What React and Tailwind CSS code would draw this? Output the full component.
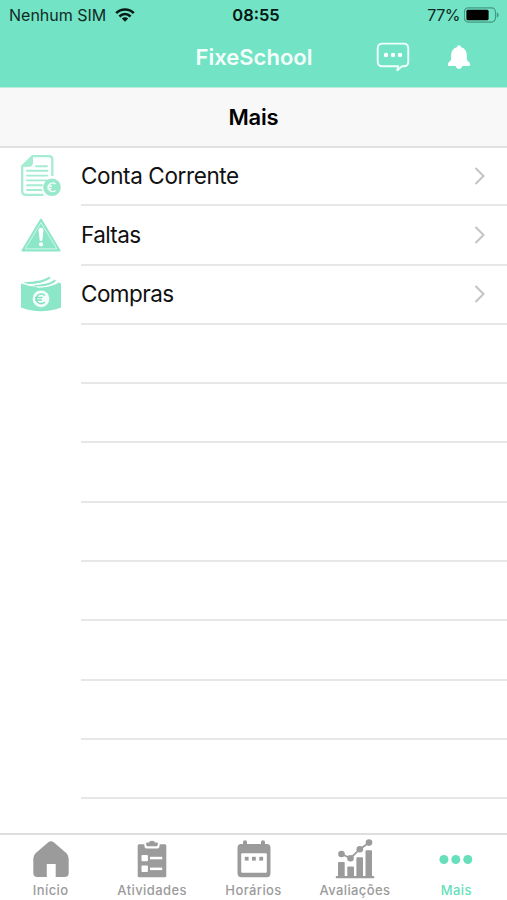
import React from 'react';

const items = [
  { label: 'Conta Corrente', icon: InvoiceIcon, spacing: 'tracking-[-0.38px]' },
  { label: 'Faltas', icon: WarningIcon, spacing: 'tracking-[-0.6px]' },
  { label: 'Compras', icon: MoneyIcon, spacing: 'tracking-[-0.55px]' },
];

const tabs = [
  { label: 'Início', icon: HomeIcon },
  { label: 'Atividades', icon: ClipboardIcon },
  { label: 'Horários', icon: CalendarIcon },
  { label: 'Avaliações', icon: ChartIcon },
  { label: 'Mais', icon: MoreIcon, active: true },
];

function WifiIcon() {
  return (
    <svg className="ml-[9px] h-[15px] w-5" viewBox="0 0 20 15" fill="none" stroke="#071a15" strokeWidth="2.7">
      <path d="M1.2 5.1C6.2.3 13.8.3 18.8 5.1" />
      <path d="M4.4 8.5C7.8 5.4 12.2 5.4 15.6 8.5" />
      <path d="M10 13.7 6.8 10.5C8.7 8.9 11.3 8.9 13.2 10.5Z" fill="#071a15" stroke="none" />
    </svg>
  );
}

function BatteryIcon() {
  return (
    <svg className="ml-1 h-4 w-9" viewBox="0 0 36 16">
      <rect x=".3" y=".9" width="31.2" height="14.2" rx="4" fill="none" stroke="#459a84" strokeWidth="1.2" />
      <rect x="2.4" y="2.8" width="22.2" height="10.4" rx="1.5" fill="#000" />
      <path d="M32.8 5.5C35.3 6.5 35.3 9.5 32.8 10.5Z" fill="#459a84" />
    </svg>
  );
}

function ChatIcon() {
  return (
    <svg className="h-[30px] w-[34px]" viewBox="0 0 34 30">
      <path d="M6.5 1.6H27.5Q32.3 1.6 32.3 6.4V19.4Q32.3 24.2 27.5 24.2H26L21.3 28.2 22.2 24.2H6.5Q1.7 24.2 1.7 19.4V6.4Q1.7 1.6 6.5 1.6Z" fill="none" stroke="#f0fffa" strokeWidth="1.9" strokeLinejoin="round" />
      <g fill="#fff"><circle cx="10" cy="13" r="2.2" /><circle cx="17" cy="13" r="2.2" /><circle cx="24" cy="13" r="2.2" /></g>
    </svg>
  );
}

function BellIcon() {
  return (
    <svg className="h-6 w-6" viewBox="0 0 24 24" fill="#fff">
      <path d="M12 .2C13.3.2 14 1 14 2.3 18 3.2 19.8 6.5 19.8 10V13.5C19.8 16.5 23.2 17 23.2 19.5Q23.2 21 21.8 21H15.3C15 22.9 13.7 23.8 12 23.8S9 22.9 8.7 21H2.2Q.8 21 .8 19.5C.8 17 4.2 16.5 4.2 13.5V10C4.2 6.5 6 3.2 10 2.3 10 1 10.7.2 12 .2Z" />
    </svg>
  );
}

function InvoiceIcon() {
  return (
    <svg className="h-[42px] w-10" viewBox="0 0 40 42" fill="none" stroke="#a5ecd3" strokeWidth="2.3">
      <path d="M31.3 21V4.5Q31.3 1.2 28 1.2H11.5L1.2 11.3V36Q1.2 39.9 5.1 39.9H22.5" />
      <path d="M11.5 1.2 1.2 11.3H8.5Q11.5 11.3 11.5 8.3Z" fill="#a5ecd3" strokeWidth="1" />
      <path d="M15 11.3H26M6 15.7H26.5M6 20.6H26.5M6 25.4H26M6 30.2H21M6 35H20.5" strokeWidth="1.9" strokeLinecap="round" />
      <circle cx="31" cy="32.2" r="8.8" fill="#98e9cc" stroke="none" />
      <path d="M34.5 29A4.3 4.3 0 1 0 34.5 35.5M26.3 31H31M26.3 33.4H30.5" stroke="#f4fffb" strokeWidth="1.5" />
    </svg>
  );
}

function WarningIcon() {
  return (
    <svg className="h-[34px] w-10" viewBox="0 0 40 34">
      <path d="M20 1.5 38.7 32.6H1.3Z" fill="#8ce6c8" stroke="#8ce6c8" strokeWidth="1.8" strokeLinejoin="round" />
      <path d="M20 4.5 35.9 30.9H4.1Z" fill="none" stroke="#d9f8ed" strokeWidth=".9" />
      <path d="M17.5 12Q17.5 9.7 20 9.7T22.5 12L21.3 22.2Q20 24 18.7 22.2Z" fill="#fff" />
      <circle cx="20" cy="26.3" r="2.1" fill="#fff" />
    </svg>
  );
}

function MoneyIcon() {
  return (
    <svg className="h-[36px] w-10" viewBox="0 0 40 36" fill="#8ce6c8">
      <path d="M0 7.5Q20 14.8 40 7.5V31.5Q20 39 0 31.5Z" />
      <path d="M1 5.7C12 6.7 23 4.4 28.3.5L29.6 2C24.5 6.3 15 8.1 8 8.2Z" />
      <path d="M11 9.2C20 9 29.5 7.3 33.8 3.5L35 5C31 8.8 23 10.8 17 10.6Z" />
      <path d="M25 10.7Q33 9.6 37.7 6.4L40 7.5Q34 10.5 25 10.7Z" />
      <path d="M6 8.9C17 9.1 26 6.9 30.5 2.9M16 11.2C25 11.2 32 9.4 36 5.8" fill="none" stroke="#fff" strokeWidth="1" />
      <circle cx="20" cy="22.8" r="8.4" fill="#f4fffb" />
      <path d="M23.8 19.5A4.9 4.9 0 1 0 23.8 26.1M14 21.6H21.5M14 24H20.8" fill="none" stroke="#7ee0c0" strokeWidth="1.5" />
    </svg>
  );
}

function HomeIcon() {
  return (
    <svg className="h-10 w-10" viewBox="0 0 40 40" fill="#9b9b9b">
      <path d="M17.3 3.2Q20 1.1 22.7 3.2L35.2 14Q37.7 16.2 37.7 19.5V34Q37.7 38 33.7 38H24.7V25H15.8V38H6.3Q2.3 38 2.3 34V19.5Q2.3 16.2 4.8 14Z" />
    </svg>
  );
}

function ClipboardIcon() {
  return (
    <svg className="h-10 w-10" viewBox="0 0 40 40" fill="#9b9b9b">
      <path d="M7.2 5.2H12.3Q12.3 9.4 14.5 9.4H25.5Q27.7 9.4 27.7 5.2H32.8Q34.3 5.2 34.3 6.7V36.7Q34.3 38.2 32.8 38.2H7.2Q5.7 38.2 5.7 36.7V6.7Q5.7 5.2 7.2 5.2Z" />
      <path d="M15.2 7.3Q14 6.5 14 4.5Q14 3.5 15.5 3.5H17Q17.3 1.8 20 1.8T23 3.5H24.5Q26 3.5 26 4.5Q26 6.5 24.8 7.3Z" />
      <g fill="#fff"><rect x="9.5" y="15.9" width="6.4" height="6.4" rx=".8" /><rect x="9.5" y="26.6" width="6.4" height="6.4" rx=".8" /><rect x="18" y="17.8" width="12.2" height="2.5" /><rect x="18" y="28.6" width="12.2" height="2.5" /></g>
    </svg>
  );
}

function CalendarIcon() {
  return (
    <svg className="h-10 w-10" viewBox="0 0 40 40" fill="#9b9b9b">
      <path d="M7 5H9V3Q9 1.3 11 1.3T13 3V5H27V3Q27 1.3 29 1.3T31 3V5H33Q36.5 5 36.5 9V34Q36.5 38.2 33 38.2H7.5Q3.5 38.2 3.5 34V9Q3.5 5 7 5Z" />
      <rect x="7.2" y="14.2" width="25.6" height="19.6" rx="1" fill="#fff" />
      <rect x="10.8" y="17.8" width="3.8" height="3.8" /><rect x="18" y="17.8" width="3.8" height="3.8" /><rect x="25.3" y="17.8" width="3.8" height="3.8" />
    </svg>
  );
}

function ChartIcon() {
  return (
    <svg className="h-10 w-10" viewBox="0 0 40 40" fill="#9b9b9b">
      <path d="M3 37.5V24Q3 23 4 23H8.7Q9.7 23 9.7 24V37.5ZM12.3 37.5V28.5Q12.3 27.5 13.3 27.5H18Q19 27.5 19 28.5V37.5ZM21.4 37.5V19.2Q21.4 18.2 22.4 18.2H27Q28 18.2 28 19.2V37.5ZM30.5 37.5V12.2Q30.5 11.2 31.5 11.2H36Q37 11.2 37 12.2V37.5Z" />
      <rect x=".7" y="37" width="38.6" height="2.3" rx="1" />
      <path d="M6.5 15 15.5 19.2 24.8 10.2 34 3.8" fill="none" stroke="#9b9b9b" strokeWidth="1.8" />
      <circle cx="6.5" cy="15" r="3.3" /><circle cx="15.5" cy="19.2" r="3.3" /><circle cx="24.8" cy="10.2" r="3.3" /><circle cx="34" cy="3.6" r="3.3" />
    </svg>
  );
}

function MoreIcon() {
  return (
    <svg className="h-10 w-10" viewBox="0 0 40 40" fill="#66dfba">
      <circle cx="7.9" cy="20.5" r="4.5" /><circle cx="19.8" cy="20.5" r="4.5" /><circle cx="31.8" cy="20.5" r="4.5" />
    </svg>
  );
}

export default function App() {
  return (
    <div className="flex h-[900px] w-[507px] flex-col overflow-hidden bg-white font-['Inter','Liberation_Sans',sans-serif] text-[#111]">
      <header className="h-[88px] shrink-0 border-b border-[#bdebdc] bg-[#72e3c5]">
        <div className="grid h-[30px] grid-cols-3 items-center pr-[7px] pl-[9px] text-[16px] text-[#102b24]">
          <div className="flex items-center whitespace-nowrap"><span>Nenhum SIM</span><WifiIcon /></div>
          <div className="pl-[3px] text-center text-[16.5px] font-semibold text-[#061612]">08:55</div>
          <div className="flex items-center justify-end"><span className="tracking-[-0.5px]">77%</span><BatteryIcon /></div>
        </div>
        <div className="grid h-[54px] grid-cols-[1fr_auto_1fr] items-center">
          <div />
          <h1 className="pl-px text-[22px] font-semibold text-[#f4fffb]">FixeSchool</h1>
          <div className="flex items-center justify-end gap-[37px] pr-[36px]"><ChatIcon /><BellIcon /></div>
        </div>
      </header>
      <div className="flex h-[60px] shrink-0 items-center justify-center border-b-2 border-[#e0e0e0] bg-[#f8f8f8] text-[22px] font-semibold tracking-[-0.2px] text-black">Mais</div>
      <main className="-mt-px flex-1">
        {Array.from({ length: 11 }, (_, i) => {
          const item = items[i];
          const Icon = item?.icon;
          return (
            <div key={i} className="flex h-[59.3px] pl-[21px]">
              <div className="flex w-[60px] items-center pb-0.5">{Icon && <Icon />}</div>
              <div className="flex flex-1 items-center justify-between border-b-2 border-[#e7e7e9] pr-[20px]">
                {item && <>
                  <span className={`pt-px text-[22.5px] leading-none ${item.spacing}`}>{item.label}</span>
                  <svg className="h-5 w-[14px]" viewBox="0 0 14 20" fill="none" stroke="#c4c4c6" strokeWidth="2.1"><path d="M2.5 2 10.5 10 2.5 18" /></svg>
                </>}
              </div>
            </div>
          );
        })}
      </main>
      <nav className="flex h-[67px] shrink-0 border-t-2 border-[#dedede]">
        {tabs.map(({ label, icon: Icon, active }) => (
          <div key={label} className={`flex flex-1 flex-col items-center pt-1 text-[13px] font-medium tracking-[0.4px] ${active ? 'text-[#66dfba]' : 'text-[#9b9b9b]'}`}>
            <Icon />
            <span className="mt-[3px] leading-4">{label}</span>
          </div>
        ))}
      </nav>
    </div>
  );
}
